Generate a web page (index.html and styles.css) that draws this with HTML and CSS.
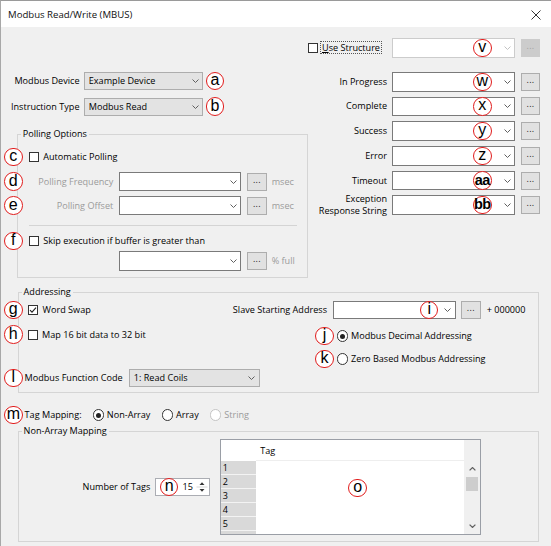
FILE: index.html
```html
<!DOCTYPE html>
<html>
<head>
<meta charset="utf-8">
<title>Modbus Read/Write (MBUS)</title>
<link rel="stylesheet" href="styles.css">
</head>
<body>
<div class="window">
  <div class="titlebar">
    <span class="title">Modbus Read/Write (MBUS)</span>
    <svg class="close" width="10" height="10" viewBox="0 0 10 10"><path d="M0.5 0.5L9.5 9.5M9.5 0.5L0.5 9.5"/></svg>
  </div>

  <div class="top">
    <div class="left">
      <div class="devrows">
        <div class="frow">
          <span class="lbl">Modbus Device</span>
          <div class="combo gray devcombo"><span>Example Device</span><svg class="chev" viewBox="0 0 7 4"><path d="M0.5 0.5L3.5 3.5L6.5 0.5"/></svg></div>
          <span class="mark after">a</span>
        </div>
        <div class="frow">
          <span class="lbl">Instruction Type</span>
          <div class="combo gray devcombo"><span>Modbus Read</span><svg class="chev" viewBox="0 0 7 4"><path d="M0.5 0.5L3.5 3.5L6.5 0.5"/></svg></div>
          <span class="mark after">b</span>
        </div>
      </div>

      <fieldset class="group polling">
        <legend>Polling Options</legend>
        <div class="chkrow first">
          <span class="mark side">c</span>
          <span class="cb"></span><span class="ctxt">Automatic Polling</span>
        </div>
        <div class="prow">
          <span class="mark side">d</span>
          <span class="plbl dis">Polling Frequency</span>
          <div class="combo white pcombo"><span></span><svg class="chev" viewBox="0 0 7 4"><path d="M0.5 0.5L3.5 3.5L6.5 0.5"/></svg></div>
          <div class="btn pbtn">...</div>
          <span class="unit dis">msec</span>
        </div>
        <div class="prow second">
          <span class="mark side">e</span>
          <span class="plbl dis">Polling Offset</span>
          <div class="combo white pcombo"><span></span><svg class="chev" viewBox="0 0 7 4"><path d="M0.5 0.5L3.5 3.5L6.5 0.5"/></svg></div>
          <div class="btn pbtn">...</div>
          <span class="unit dis">msec</span>
        </div>
        <div class="sep"></div>
        <div class="chkrow skip">
          <span class="mark side">f</span>
          <span class="cb"></span><span class="ctxt">Skip execution if buffer is greater than</span>
        </div>
        <div class="prow full">
          <span class="plbl"></span>
          <div class="combo white pcombo"><span></span><svg class="chev" viewBox="0 0 7 4"><path d="M0.5 0.5L3.5 3.5L6.5 0.5"/></svg></div>
          <div class="btn pbtn">...</div>
          <span class="unit dis">% full</span>
        </div>
      </fieldset>
    </div>

    <div class="right">
      <div class="rrow userow">
        <div class="usecell"><span class="cb"></span><span class="focus"><u>U</u>se Structure</span></div>
        <div class="combo disabled rcombo"><span></span><span class="mark in">v</span><svg class="chev" viewBox="0 0 7 4"><path d="M0.5 0.5L3.5 3.5L6.5 0.5"/></svg></div>
        <div class="btn off rbtn">...</div>
      </div>
      <div class="rrows">
        <div class="rrow">
          <span class="lbl">In Progress</span>
          <div class="combo white rcombo"><span></span><span class="mark in">w</span><svg class="chev" viewBox="0 0 7 4"><path d="M0.5 0.5L3.5 3.5L6.5 0.5"/></svg></div>
          <div class="btn rbtn">...</div>
        </div>
        <div class="rrow">
          <span class="lbl">Complete</span>
          <div class="combo white rcombo"><span></span><span class="mark in">x</span><svg class="chev" viewBox="0 0 7 4"><path d="M0.5 0.5L3.5 3.5L6.5 0.5"/></svg></div>
          <div class="btn rbtn">...</div>
        </div>
        <div class="rrow">
          <span class="lbl">Success</span>
          <div class="combo white rcombo"><span></span><span class="mark in">y</span><svg class="chev" viewBox="0 0 7 4"><path d="M0.5 0.5L3.5 3.5L6.5 0.5"/></svg></div>
          <div class="btn rbtn">...</div>
        </div>
        <div class="rrow">
          <span class="lbl">Error</span>
          <div class="combo white rcombo"><span></span><span class="mark in">z</span><svg class="chev" viewBox="0 0 7 4"><path d="M0.5 0.5L3.5 3.5L6.5 0.5"/></svg></div>
          <div class="btn rbtn">...</div>
        </div>
        <div class="rrow">
          <span class="lbl">Timeout</span>
          <div class="combo white rcombo"><span></span><span class="mark in dbl">aa</span><svg class="chev" viewBox="0 0 7 4"><path d="M0.5 0.5L3.5 3.5L6.5 0.5"/></svg></div>
          <div class="btn rbtn">...</div>
        </div>
        <div class="rrow">
          <span class="lbl two">Exception<br>Response String</span>
          <div class="combo white rcombo"><span></span><span class="mark in dbl">bb</span><svg class="chev" viewBox="0 0 7 4"><path d="M0.5 0.5L3.5 3.5L6.5 0.5"/></svg></div>
          <div class="btn rbtn">...</div>
        </div>
      </div>
    </div>
  </div>

  <fieldset class="group addressing">
    <legend>Addressing</legend>
    <div class="arow1">
      <span class="mark side">g</span>
      <div class="lb">
        <div class="chkgrp"><span class="cb checked"><svg viewBox="0 0 8 8"><path d="M1 4.2L3 6.2L7 1.6"/></svg></span><span class="ctxt">Word Swap</span></div>
        <span>Slave Starting Address</span>
      </div>
      <div class="combo white slave"><span></span><span class="mark in">i</span><svg class="chev" viewBox="0 0 7 4"><path d="M0.5 0.5L3.5 3.5L6.5 0.5"/></svg></div>
      <div class="btn sbtn">...</div>
      <span class="plus">+ 000000</span>
    </div>
    <div class="arow2">
      <div class="chkitem">
        <span class="mark side">h</span>
        <span class="cb"></span><span class="ctxt">Map 16 bit data to 32 bit</span>
      </div>
      <div class="radios">
        <div class="rad"><span class="mark inl">j</span><span class="rb on"></span><span class="rtxt">Modbus Decimal Addressing</span></div>
        <div class="rad"><span class="mark inl">k</span><span class="rb"></span><span class="rtxt">Zero Based Modbus Addressing</span></div>
      </div>
    </div>
    <div class="arow3">
      <span class="mark side">l</span>
      <span class="fclbl">Modbus Function Code</span>
      <div class="combo gray fccombo"><span>1: Read Coils</span><svg class="chev" viewBox="0 0 7 4"><path d="M0.5 0.5L3.5 3.5L6.5 0.5"/></svg></div>
    </div>
  </fieldset>

  <div class="tagmap">
    <span class="mark side">m</span>
    <span>Tag Mapping:</span>
    <span class="rb on tm1"></span><span class="rtxt">Non-Array</span>
    <span class="rb tm2"></span><span class="rtxt">Array</span>
    <span class="rb off tm2"></span><span class="rtxt dis">String</span>
  </div>

  <fieldset class="group nonarray">
    <legend>Non-Array Mapping</legend>
    <div class="nainner">
      <div class="numblock">
        <span>Number of Tags</span>
        <div class="spin">
          <span class="mark in">n</span>
          <span class="spinval">15</span>
          <span class="updown"><svg viewBox="0 0 12 16" width="12" height="16"><path class="ud-line" d="M0.5 8H11.5"/><path class="ud-tri" d="M3.5 6L6 3.3L8.5 6Z"/><path class="ud-tri" d="M3.5 10L6 12.7L8.5 10Z"/></svg></span>
        </div>
      </div>
      <div class="table">
        <div class="rhcol">
          <div class="hcell"></div>
          <div class="rcell">1</div>
          <div class="rcell">2</div>
          <div class="rcell">3</div>
          <div class="rcell">4</div>
          <div class="rcell">5</div>
          <div class="rcell"></div>
        </div>
        <div class="maincol">
          <div class="hcell taghead">Tag</div>
          <span class="mark in omark">o</span>
        </div>
        <div class="scrollcol">
          <div class="shead"></div>
          <div class="sarrow"><svg class="schev" viewBox="0 0 7 4"><path d="M0.6 3.4L3.5 0.6L6.4 3.4"/></svg></div>
          <div class="thumb"></div>
          <div class="sspace"></div>
          <div class="sarrow"><svg class="schev" viewBox="0 0 7 4"><path d="M0.6 0.6L3.5 3.4L6.4 0.6"/></svg></div>
        </div>
      </div>
    </div>
  </fieldset>
</div>
</body>
</html>
```

FILE: styles.css
```css
* { box-sizing: border-box; }
html, body { margin: 0; padding: 0; }
body {
  background: #f0f0f0;
  font-family: "Open Sans", sans-serif;
  font-size: 9.1px;
  line-height: 12px;
  color: #000;
}
.window {
  width: 551px;
  height: 546px;
  overflow: hidden;
  background: #f0f0f0;
  border-top: 1px solid #9a9a9a;
  border-left: 1px solid #a8a8a8;
}
.titlebar {
  height: 26px;
  background: #fff;
  display: flex;
  align-items: center;
  justify-content: space-between;
  padding: 1px 10px 0 7px;
  font-size: 9.6px;
  color: #111;
}
.close path { stroke: #333; stroke-width: 1; fill: none; }

/* generic widgets */
.combo {
  position: relative;
  display: flex;
  align-items: center;
  justify-content: space-between;
  padding: 0 3.5px 0 3.5px;
  white-space: nowrap;
}
.combo.white { background: #fff; border: 1px solid #7a7a7a; }
.combo.gray { background: #e3e3e3; border: 1px solid #adadad; }
.combo.disabled { background: #fff; border: 1px solid #cccccc; }
.chev { width: 7px; height: 4px; flex: none; }
.chev path { fill: none; stroke: #606060; stroke-width: 1; }
.combo.disabled .chev path { stroke: #c2c2c2; }

.btn {
  display: flex;
  align-items: center;
  justify-content: center;
  background: #e1e1e1;
  border: 1px solid #adadad;
  font-size: 9px;
  padding-bottom: 4px;
  color: #222;
  letter-spacing: 0.3px;
}
.btn.off { background: #cccccc; border-color: #cccccc; color: #a3a3a3; }

.cb {
  display: inline-block;
  width: 10px;
  height: 10px;
  border: 1px solid #333;
  background: #fff;
  flex: none;
}
.cb.checked svg { display: block; width: 8px; height: 8px; }
.cb.checked path { fill: none; stroke: #222; stroke-width: 1.1; }
.rb {
  display: inline-block;
  width: 11.5px;
  height: 11.5px;
  border: 1px solid #333;
  border-radius: 50%;
  background: #fff;
  flex: none;
  position: relative;
}
.rb.on::after {
  content: "";
  position: absolute;
  left: 2.25px;
  top: 2.25px;
  width: 5px;
  height: 5px;
  border-radius: 50%;
  background: #222;
}
.rb.off { border-color: #c4c4c4; }
.dis { color: #9b9b9b; }

.mark {
  width: 18.5px;
  height: 18.5px;
  border-radius: 50%;
  border: 1.7px solid #e11c1c;
  background: #fff;
  display: flex;
  align-items: center;
  justify-content: center;
  font-family: "Liberation Sans", Arial, sans-serif;
  font-size: 16px;
  line-height: 16px;
  padding-bottom: 2px;
  color: #000;
  flex: none;
  z-index: 2;
}
.mark.dbl { font-weight: bold; font-size: 14.5px; letter-spacing: -0.6px; }
.mark.side { position: absolute; top: 50%; margin-top: -9.25px; }
.mark.in { position: absolute; top: 50%; margin-top: -9.25px; }
.mark.after { margin-left: 2.4px; }
.mark.inl { margin: -3.25px 0; }

/* fieldsets */
fieldset.group {
  border: 1px solid #d5d5d5;
  padding: 0;
  margin: 0;
  min-width: 0;
}
fieldset.group legend {
  padding: 0 2px;
  margin-left: 3px;
  line-height: 12px;
}

/* top section */
.top { display: flex; align-items: flex-start; }
.left { width: 306px; flex: none; }
.right { flex: 1; padding-top: 11px; }

.devrows { padding-top: 45px; display: flex; flex-direction: column; gap: 7.5px; }
.frow { display: flex; align-items: center; height: 18px; }
.frow .lbl { width: 78.5px; text-align: right; white-space: nowrap; }
.devcombo { margin-left: 4.8px; width: 119px; height: 18px; }

.polling { margin: 12.5px 0 0 15.7px !important; width: 291px; padding-bottom: 5.7px !important; }
.chkrow { position: relative; display: flex; align-items: center; height: 12px; padding-left: 11.6px; }
.chkrow.first { margin-top: 11px; }
.chkrow.skip { margin-top: 9px; }
.ctxt { margin-left: 4px; white-space: nowrap; }
.prow { position: relative; display: flex; align-items: center; height: 19px; margin-top: 9px; }
.prow.second { margin-top: 5px; }
.prow.full { margin-top: 4px; height: 20px; }
.plbl { width: 95.6px; text-align: right; white-space: nowrap; flex: none; }
.pcombo { margin-left: 5.7px; width: 122.3px; height: 100%; }
.pbtn { margin-left: 6px; width: 19.4px; height: 18px; }
.unit { margin-left: 5px; white-space: nowrap; }
.polling .mark.side { left: -13.7px; }
.sep { margin: 10px 9.3px 0 11.6px; border-top: 1px solid #d4d4d4; height: 0; }

.rrow { display: flex; align-items: center; height: 19.5px; }
.rrow .lbl { width: 80px; text-align: right; white-space: nowrap; flex: none; }
.rrow .lbl.two { line-height: 11.7px; }
.usecell { width: 80px; flex: none; display: flex; align-items: center; padding-left: 1px; }
.focus { margin-left: 2px; padding: 0 1px; border: 1px dotted #555; line-height: 11px; white-space: nowrap; }
.rcombo { margin-left: 5px; width: 123px; height: 19.5px; }
.rcombo .mark.in { left: 80px; }
.rbtn { margin-left: 6px; width: 19px; height: 18px; }
.userow { margin-bottom: 14.5px; }
.rrows { display: flex; flex-direction: column; gap: 5.2px; }

/* addressing */
.addressing { margin: 8.6px 0 0 16.6px !important; width: 521px; padding-bottom: 5.6px !important; }
.addressing .mark.side { left: -14.6px; }
.arow1 { position: relative; display: flex; align-items: center; height: 18.5px; margin-top: 2.7px; }
.lb { width: 308.4px; flex: none; display: flex; align-items: center; justify-content: space-between; padding-left: 9.5px; white-space: nowrap; }
.chkgrp { display: flex; align-items: center; }
.chkgrp .ctxt { margin-left: 4.5px; }
.slave { margin-left: 6px; width: 123px; height: 18.5px; }
.slave .mark.in { left: 86px; }
.sbtn { margin-left: 5px; width: 19.7px; height: 18.5px; }
.plus { margin-left: 6px; white-space: nowrap; }
.arow2 { display: flex; margin-top: 9.7px; }
.chkitem { position: relative; width: 296.6px; flex: none; height: 11px; display: flex; align-items: center; padding-left: 9.5px; }
.radios { display: flex; flex-direction: column; gap: 11px; margin-top: 1px; }
.rad { display: flex; align-items: center; height: 12px; }
.rad .rb { margin-left: 3.1px; }
.rtxt { margin-left: 2.8px; white-space: nowrap; }
.arow3 { position: relative; display: flex; align-items: center; height: 17.7px; margin-top: 4px; padding-left: 6px; }
.fclbl { width: 104.7px; flex: none; white-space: nowrap; }
.fccombo { width: 130.7px; height: 17.7px; }

/* tag mapping */
.tagmap { position: relative; display: flex; align-items: center; height: 14px; margin-top: 14.7px; padding-left: 23.6px; }
.tagmap .mark.side { left: 3.2px; }
.tm1 { margin-left: 11px; }
.tm2 { margin-left: 11.2px; }

/* non-array */
.nonarray { margin: 3px 0 0 16.6px !important; width: 521px; padding-bottom: 6.3px !important; }
.nainner { display: flex; padding-top: 2px; }
.numblock { width: 201.4px; flex: none; display: flex; align-items: center; justify-content: flex-end; padding-right: 10px; white-space: nowrap; }
.spin {
  position: relative;
  margin-left: 4.6px;
  width: 55px;
  height: 18.4px;
  border: 1px solid #abadb3;
  background: #fff;
  display: flex;
  align-items: center;
  justify-content: flex-end;
  padding-right: 1px;
}
.spin .mark.in { left: 4px; }
.spinval { margin-right: 3px; }
.updown { display: flex; width: 12px; height: 16px; }
.updown svg { display: block; }
.ud-line { stroke: #d6d6d6; stroke-width: 1; fill: none; }
.ud-tri { fill: #333; }

.table {
  width: 261px;
  height: 96px;
  border: 1px solid #9a9ea6;
  background: #fff;
  display: flex;
  overflow: hidden;
}
.rhcol { width: 35.5px; flex: none; }
.hcell { height: 21px; background: #fff; }
.rcell {
  height: 14px;
  background: #d9d9d9;
  border-bottom: 1px solid #f3f3f3;
  padding-left: 1.8px;
  line-height: 13px;
  font-size: 9px;
}
.maincol { position: relative; flex: 1; }
.taghead { border-bottom: 1px solid #eeeeee; padding-left: 3.7px; line-height: 21px; }
.omark { left: 92px; top: 38.5px !important; margin-top: 0 !important; }
.scrollcol { width: 16px; flex: none; background: #f0f0f0; display: flex; flex-direction: column; }
.shead { height: 21px; }
.sarrow { height: 16px; display: flex; align-items: center; justify-content: center; padding-left: 1px; }
.schev { width: 7px; height: 4px; }
.schev path { fill: none; stroke: #606060; stroke-width: 1.3; }
.thumb { height: 13.4px; width: 12.2px; margin-left: 2.3px; background: #cdcdcd; }
.sspace { flex: 1; }
```
